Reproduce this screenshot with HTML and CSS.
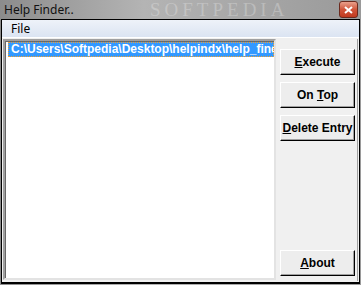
FILE: index.html
```html
<!DOCTYPE html>
<html lang="en">
<head>
    <meta charset="UTF-8">
    <title>Help Finder..</title>
    <link rel="stylesheet" href="styles.css">
</head>
<body>
    <div class="window">
        <div class="titlebar">
            <span class="title">Help Finder..</span>
            <span class="watermark">SOFTPEDIA</span>
            <button class="close" type="button">
                <svg width="9" height="8" viewBox="0 0 9 8">
                    <path d="M1 1 L8 7 M8 1 L1 7" stroke="#fff" stroke-width="2"/>
                </svg>
            </button>
        </div>
        <div class="frame">
            <div class="menubar">
                <span class="menu-item">File</span>
            </div>
            <div class="client">
                <div class="listbox">
                    <div class="list-item selected">C:\Users\Softpedia\Desktop\helpindx\help_finder.exe</div>
                </div>
                <div class="side">
                    <button class="btn" type="button"><u>E</u>xecute</button>
                    <button class="btn" type="button">On <u>T</u>op</button>
                    <button class="btn" type="button"><u>D</u>elete Entry</button>
                    <button class="btn bottom" type="button"><u>A</u>bout</button>
                </div>
            </div>
        </div>
    </div>
</body>
</html>
```

FILE: styles.css
```css
body {
    margin: 0;
    padding: 0;
    background-color: #fff;
}

.window {
    width: 361px;
    height: 285px;
    display: flex;
    flex-direction: column;
    background: linear-gradient(to right, #8c8c8c, #b4b4b4 40%, #a6a6a6 70%, #9a9a9a);
    overflow: hidden;
}

.titlebar {
    height: 19px;
    flex: none;
    display: flex;
    align-items: center;
    position: relative;
}

.title {
    font-family: "Noto Sans", "Liberation Sans", sans-serif;
    font-size: 12px;
    color: #111;
    padding-left: 4px;
    position: relative;
    z-index: 1;
}

.watermark {
    position: absolute;
    left: 150px;
    top: 0;
    font-family: "Liberation Serif", serif;
    font-size: 19px;
    line-height: 19px;
    letter-spacing: 4px;
    color: rgba(255, 255, 255, 0.25);
}

.close {
    position: absolute;
    right: 3px;
    top: 1px;
    width: 19px;
    height: 17px;
    padding: 0;
    border: 1px solid #6b2a1e;
    border-radius: 3px;
    background: linear-gradient(to bottom, #e9a08c, #d0553a 50%, #c2391e);
    display: flex;
    align-items: center;
    justify-content: center;
}

.frame {
    flex: 1;
    display: flex;
    flex-direction: column;
    margin: 0 1px 1px 1px;
    border: 1px solid #000;
    border-bottom-width: 2px;
    background-color: #f0f0f0;
}

.menubar {
    height: 17px;
    flex: none;
    background: linear-gradient(to bottom, #eef2f9, #dbe4f2);
    display: flex;
    align-items: center;
}

.menu-item {
    font-family: "Noto Sans", "Liberation Sans", sans-serif;
    font-size: 12px;
    color: #000;
    padding-left: 9px;
}

.client {
    flex: 1;
    display: flex;
    padding-top: 1px;
    border-top: 1px solid #fff;
}

.listbox {
    width: 271px;
    margin-left: 1px;
    margin-bottom: 2px;
    background-color: #fff;
    border-top: 2px solid #a0a0a0;
    border-left: 2px solid #a0a0a0;
    border-right: 2px solid #e3e3e3;
    border-bottom: 2px solid #e3e3e3;
    box-shadow: inset 1px 1px 0 #696969;
    padding: 1px 0 0 3px;
    overflow: hidden;
}

.list-item {
    font-family: "Liberation Sans", Arial, sans-serif;
    font-weight: bold;
    font-size: 12px;
    line-height: 15px;
    white-space: nowrap;
    overflow: hidden;
    padding-left: 3px;
}

.list-item.selected {
    background-color: #3399ff;
    color: #fff;
    outline: 1px dotted #f0a030;
    outline-offset: -1px;
}

.side {
    flex: 1;
    display: flex;
    flex-direction: column;
    gap: 7px;
    padding: 10px 2px 5px 4px;
    border-right: 1px solid #a0a0a0;
    margin-right: 1px;
    margin-bottom: 1px;
}

.btn {
    width: 75px;
    height: 26px;
    padding: 0;
    font-family: "Liberation Sans", Arial, sans-serif;
    font-weight: bold;
    font-size: 12px;
    color: #000;
    background-color: #ededed;
    border-top: 1px solid #fff;
    border-left: 1px solid #fff;
    border-right: 1px solid #000;
    border-bottom: 1px solid #000;
    box-shadow: inset -1px -1px 0 #a0a0a0;
}

.btn.bottom {
    margin-top: auto;
}
```
